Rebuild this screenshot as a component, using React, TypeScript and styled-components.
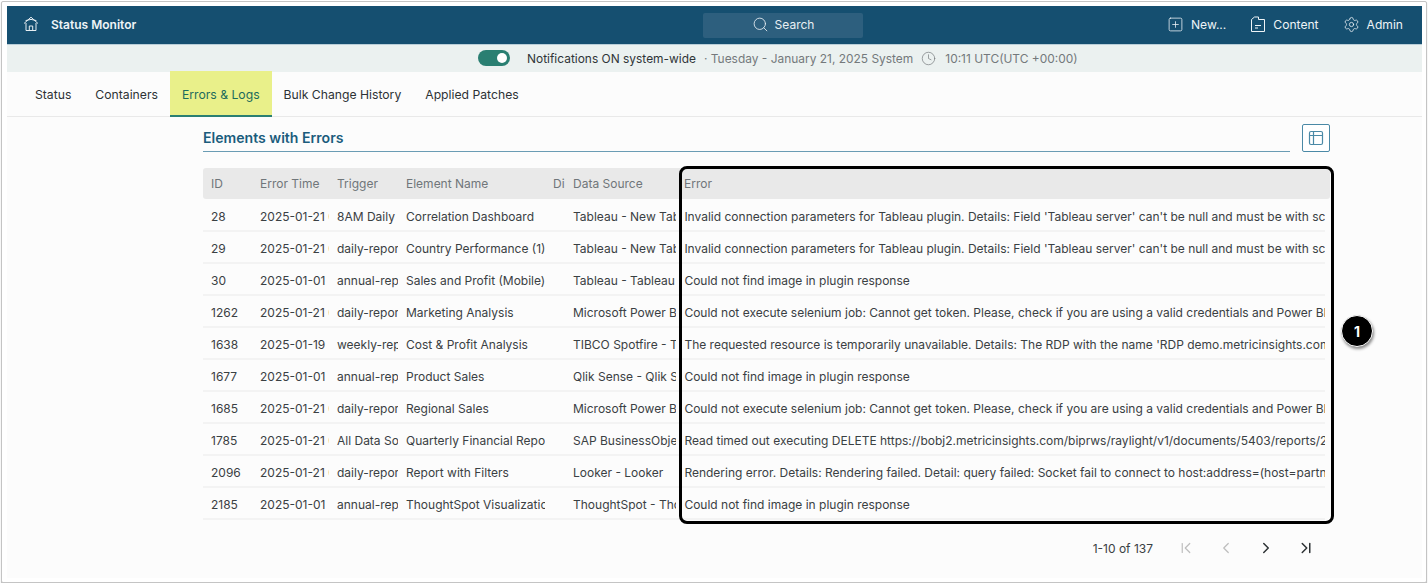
import React from "react";
import styled, { createGlobalStyle } from "styled-components";
import { Search, SquarePlus, Settings, Clock, ChevronFirst, ChevronLeft, ChevronRight, ChevronLast } from "lucide-react";

const Global = createGlobalStyle`
  html, body { margin: 0; padding: 0; background: #fff; }
  body { font-family: Inter, "Liberation Sans", sans-serif; }
`;
const Frame = styled.div`
  position: relative; box-sizing: border-box; width: 1426px; height: 582px; margin: 1px 0 0 1px;
  border: 1px solid #c4c4c4; border-radius: 2px; padding: 4px 4px 4px 5px; background: #fff;
  box-shadow: 0 1px 1px #aaa;
`;
const Page = styled.div`
  height: 100%; background: #fcfcfc; display: flex; flex-direction: column;
`;
const Header = styled.header`
  height: 38px; flex: none; background: #154f70; color: #fff; display: grid; grid-template-columns: 696px 160px 1fr;
  align-items: center; font-size: 12.5px;
`;
const Brand = styled.div`
  display: flex; align-items: center; gap: 12px; padding-left: 16px; margin-bottom: 2px; font-weight: 600; font-size: 12px; color: #eef4f7;
`;
const SearchBox = styled.div`
  height: 25px; box-sizing: border-box; padding-bottom: 1px; background: #2d5f7e; border-radius: 2px; display: flex; align-items: center; justify-content: center; gap: 6px;
  font-size: 12px; color: #e8eff3;
`;
const Actions = styled.div`
  display: flex; justify-content: flex-end; align-items: center; gap: 24px; padding-right: 19px; margin-bottom: 2px;
`;
const Action = styled.div`
  display: flex; align-items: center; gap: 7px; font-size: 12.1px; color: #eef4f7;
`;
const InfoBar = styled.div`
  height: 28px; flex: none; box-sizing: border-box; background: #ebf1f0; border-top: 1px solid #b9ced8; display: flex; align-items: center;
  font-size: 11.95px; color: #74797c; padding: 0 0 1px 471px;
`;
const Toggle = styled.div`
  position: relative; width: 32px; height: 16px; border-radius: 8px; background: #2a7f72; margin-right: 17px;
  &::after { content: ""; position: absolute; right: 3px; top: 3px; width: 10px; height: 10px; border-radius: 50%; background: #fff; }
`;
const Notice = styled.span`
  color: #2f3538; margin-right: 8px;
`;
const ClockWrap = styled.span`
  display: inline-flex; margin: 0 9px 0 8px;
`;
const Tabs = styled.nav`
  height: 46px; flex: none; box-sizing: border-box; margin-top: -1px; border-bottom: 1px solid #e9e9e9; display: flex; padding-left: 16px;
`;
const Tab = styled.div<{ $active?: boolean }>`
  box-sizing: border-box; height: 46px; padding: 0 12px; display: flex; align-items: center; font-size: 12.2px; color: ${p => p.$active ? "#1d6b5c" : "#2d3235"};
  background: ${p => p.$active ? "#e9f08a" : "transparent"};
  box-shadow: ${p => p.$active ? "inset 0 -2px 0 #2a7f72" : "none"};
`;
const Content = styled.main`
  width: 1127px; margin-left: 196px;
`;
const TitleRow = styled.div`
  display: flex; align-items: flex-end; gap: 12px; height: 34px; margin-top: 1px;
`;
const Title = styled.h2`
  flex: 1; margin: 0; height: 25px; box-sizing: border-box; font-size: 14.1px; line-height: 22px; font-weight: 600; color: #1b5c7c; border-bottom: 1px solid #6a9cb4;
`;
const IconButton = styled.button`
  box-sizing: border-box; width: 28px; height: 28px; padding: 0; border: 1px solid #4a89a6; border-radius: 2px; background: #fff; display: flex; align-items: center; justify-content: center;
`;
const Table = styled.div`
  margin-top: 16px;
`;
const columns = "49px 77px 69px 147px 20px 111px 654px";
const HeadRow = styled.div`
  display: grid; grid-template-columns: ${columns}; height: 31px; margin-bottom: 1px; align-items: center; background: #e9e9e9; border-radius: 3px;
  font-size: 12px; color: #70767a;
`;
const Row = styled.div`
  display: grid; grid-template-columns: ${columns}; height: 32px; box-sizing: border-box; padding-top: 2px; align-items: center; width: 1122px;
  border-bottom: 2px solid #f3f3f3; font-size: 12px; color: #3a4043;
`;
const Cell = styled.div<{ $wide?: boolean }>`
  overflow: hidden; white-space: nowrap; padding-left: 8px; ${p => p.$wide ? "padding-left: 8.4px; margin-right: 5px;" : ""}
`;
const Pager = styled.div`
  display: flex; align-items: center; justify-content: flex-end; height: 30px; margin-top: 13px; padding-right: 4px; font-size: 12px; color: #3a4043;
`;
const PageText = styled.span`
  margin-right: 13px;
`;
const PageBtn = styled.span`
  width: 40px; display: flex; justify-content: center;
`;
const Annotation = styled.div`
  position: absolute; left: 677px; top: 164px; width: 655px; height: 358px; box-sizing: border-box; border: 3px solid #000; border-radius: 8px; pointer-events: none;
`;
const Badge = styled.div`
  position: absolute; left: 1339px; top: 313px; width: 32px; height: 32px; border-radius: 50%; background: #000; color: #fff; border: 1px solid #fff;
  box-sizing: border-box; box-shadow: 1px 2px 3px rgba(0,0,0,.45); display: flex; align-items: center; justify-content: center; font-size: 14px; font-weight: 700;
`;

const HomeIcon = () => (
  <svg width="16" height="16" viewBox="0 0 16 16" fill="none" stroke="#e6eef2" strokeWidth="1">
    <path d="M1 7.5 8 1.2l7 6.3M2.6 4.6 8 3.4l5.4 1.2" />
    <path d="M3 7v7.5h10V7M6.3 14.5V10h3.4v4.5" />
  </svg>
);
const FileIcon = () => (
  <svg width="16" height="17" viewBox="0 0 16 17" fill="none" stroke="#eef4f7" strokeWidth="1">
    <path d="M1.5 15.5v-12l3-2.5h4v2.5h6v12z" />
    <path d="M5 9.5h6M5 12h3" />
  </svg>
);
const TableIcon = () => (
  <svg width="16" height="16" viewBox="0 0 16 16" fill="none" stroke="#4a89a6" strokeWidth="1.2">
    <rect x="1.5" y="1.5" width="13" height="13" rx="1.5" />
    <path d="M1.5 5.5h13M5.5 1.5v13" />
  </svg>
);

const rows = [
  ["28", "2025-01-21 06:00", "8AM Daily", "Correlation Dashboard", "Tableau - New Tableau", "Invalid connection parameters for Tableau plugin. Details: Field 'Tableau server' can't be null and must be with scheme"],
  ["29", "2025-01-21 06:00", "daily-reports", "Country Performance (1)", "Tableau - New Tableau", "Invalid connection parameters for Tableau plugin. Details: Field 'Tableau server' can't be null and must be with scheme"],
  ["30", "2025-01-01", "annual-reports", "Sales and Profit (Mobile)", "Tableau - Tableau", "Could not find image in plugin response"],
  ["1262", "2025-01-21 06:00", "daily-reports", "Marketing Analysis", "Microsoft Power BI", "Could not execute selenium job: Cannot get token. Please, check if you are using a valid credentials and Power BI account"],
  ["1638", "2025-01-19", "weekly-reports", "Cost & Profit Analysis", "TIBCO Spotfire - TIBCO", "The requested resource is temporarily unavailable. Details: The RDP with the name 'RDP demo.metricinsights.com' failed"],
  ["1677", "2025-01-01", "annual-reports", "Product Sales", "Qlik Sense - Qlik Sense", "Could not find image in plugin response"],
  ["1685", "2025-01-21 06:00", "daily-reports", "Regional Sales", "Microsoft Power BI", "Could not execute selenium job: Cannot get token. Please, check if you are using a valid credentials and Power BI account"],
  ["1785", "2025-01-21 06:00", "All Data Sources", "Quarterly Financial Reports", "SAP BusinessObjects", "Read timed out executing DELETE https://bobj2.metricinsights.com/biprws/raylight/v1/documents/5403/reports/2/parameters"],
  ["2096", "2025-01-21 06:00", "daily-reports", "Report with Filters", "Looker - Looker", "Rendering error. Details: Rendering failed. Detail: query failed: Socket fail to connect to host:address=(host=partner-db)"],
  ["2185", "2025-01-01", "annual-reports", "ThoughtSpot Visualization", "ThoughtSpot - ThoughtSpot", "Could not find image in plugin response"],
];

export default function App() {
  return (
    <Frame>
      <Global />
      <Page>
        <Header>
          <Brand><HomeIcon />Status Monitor</Brand>
          <SearchBox><Search size={17} strokeWidth={1.2} />Search</SearchBox>
          <Actions>
            <Action><SquarePlus size={17} strokeWidth={1.1} />New...</Action>
            <Action><FileIcon />Content</Action>
            <Action><Settings size={17} strokeWidth={1.1} />Admin</Action>
          </Actions>
        </Header>
        <InfoBar>
          <Toggle />
          <Notice>Notifications ON system-wide</Notice>
          · Tuesday - January 21, 2025 System
          <ClockWrap><Clock size={15} strokeWidth={1.1} /></ClockWrap>
          10:11 UTC(UTC +00:00)
        </InfoBar>
        <Tabs>
          <Tab>Status</Tab>
          <Tab>Containers</Tab>
          <Tab $active>Errors &amp; Logs</Tab>
          <Tab>Bulk Change History</Tab>
          <Tab>Applied Patches</Tab>
        </Tabs>
        <Content>
          <TitleRow>
            <Title>Elements with Errors</Title>
            <IconButton aria-label="Columns"><TableIcon /></IconButton>
          </TitleRow>
          <Table>
            <HeadRow>
              <Cell>ID</Cell><Cell>Error Time</Cell><Cell>Trigger</Cell><Cell>Element Name</Cell><Cell>Di</Cell><Cell>Data Source</Cell><Cell>Error</Cell>
            </HeadRow>
            {rows.map(r => (
              <Row key={r[0]}>
                <Cell>{r[0]}</Cell><Cell>{r[1]}</Cell><Cell>{r[2]}</Cell><Cell>{r[3]}</Cell><Cell />
                <Cell>{r[4]}</Cell><Cell $wide>{r[5]}</Cell>
              </Row>
            ))}
          </Table>
          <Pager>
            <PageText>1-10 of 137</PageText>
            <PageBtn><ChevronFirst size={18} color="#bdbdbd" strokeWidth={1.6} /></PageBtn>
            <PageBtn><ChevronLeft size={18} color="#bdbdbd" strokeWidth={1.6} /></PageBtn>
            <PageBtn><ChevronRight size={18} color="#2d3235" strokeWidth={2} /></PageBtn>
            <PageBtn><ChevronLast size={18} color="#2d3235" strokeWidth={2} /></PageBtn>
          </Pager>
        </Content>
      </Page>
      <Annotation />
      <Badge>1</Badge>
    </Frame>
  );
}
